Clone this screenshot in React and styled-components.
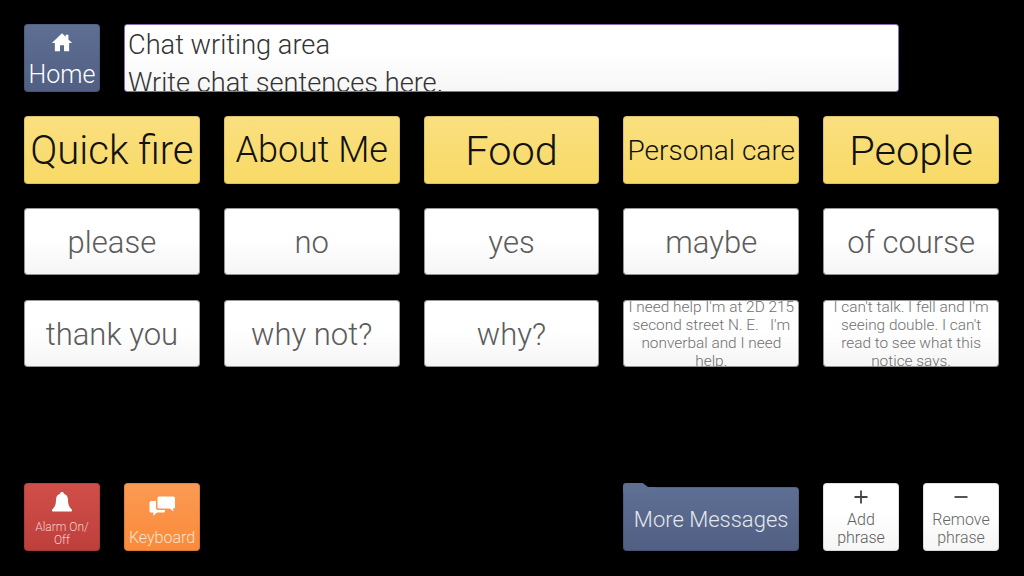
import React from "react";
import styled, { createGlobalStyle } from "styled-components";

const Global = createGlobalStyle`
  html, body { margin: 0; padding: 0; background: #000; }
  body { font-family: Roboto, "Liberation Sans", sans-serif; font-weight: 300; }
`;

const WHITE_BG = "linear-gradient(#ffffff 45%, #f5f5f5)";
const BLUE_BG = "linear-gradient(#5f6f94, #505f82)";

const Page = styled.div`
  width: 1024px;
  height: 576px;
  box-sizing: border-box;
  padding: 24px 25px 25px 24px;
  background: #000;
  display: flex;
  flex-direction: column;
  overflow: hidden;
`;

const TopBar = styled.div`
  display: flex;
  gap: 24px;
  height: 68px;
  margin-bottom: 24px;
  padding-right: 100px;
`;

const Grid = styled.div`
  display: grid;
  grid-template-columns: repeat(5, 1fr);
  grid-auto-rows: 68px;
  gap: 24px;
`;

const BottomBar = styled.div`
  margin-top: auto;
  display: grid;
  grid-template-columns: repeat(5, 1fr);
  gap: 24px;
  height: 68px;
`;

const Group = styled.div`
  display: flex;
  gap: 24px;
  grid-column: ${p => p.$span || "auto"};
  justify-content: ${p => p.$end ? "flex-end" : "flex-start"};
`;

const Tile = styled.div`
  box-sizing: border-box;
  border-radius: 4px;
  display: flex;
  align-items: center;
  justify-content: center;
  text-align: center;
  overflow: hidden;
  min-width: 0;
  box-shadow: inset 0 0 0 1px rgba(0, 0, 0, 0.12);
`;

const CategoryTile = styled(Tile)`
  background: linear-gradient(#fadf80, #f8da66);
  color: #111;
  font-size: ${p => p.$size || 40}px;
  white-space: nowrap;
`;

const PhraseTile = styled(Tile)`
  background: ${WHITE_BG};
  color: #5c5c5c;
  font-size: 31px;
  height: 67px;
  padding-top: 1px;
  box-shadow: inset 0 0 0 1px rgba(0, 0, 0, 0.4);
`;

const LongPhraseTile = styled(Tile)`
  background: ${WHITE_BG};
  color: #707070;
  font-size: 15.4px;
  line-height: 18px;
  padding: 0 3px;
  height: 67px;
  box-shadow: inset 0 0 0 1px rgba(0, 0, 0, 0.4);
`;

const SmallTile = styled(Tile)`
  width: 76px;
  flex: none;
  flex-direction: column;
  color: ${p => p.$fg || "#fff"};
  background: ${p => p.$bg};
  padding-top: ${p => p.$pt || 0}px;
`;

const IconSlot = styled.div`
  height: ${p => p.$h || 24}px;
  margin-bottom: ${p => p.$mb || 0}px;
  display: flex;
  align-items: center;
  justify-content: center;
`;

const Label = styled.div`
  font-size: ${p => p.$size || 16}px;
  line-height: ${p => p.$lh || 18}px;
  color: ${p => p.$color || "inherit"};
`;

const ChatBox = styled.div`
  flex: 1;
  box-sizing: border-box;
  background: linear-gradient(#ffffff 40%, #f6f6f6);
  border: 1px solid #8a6db0;
  border-radius: 3px;
  padding: 1px 3px 0;
  color: #333;
  font-size: 27.2px;
  line-height: 38px;
  overflow: hidden;
  white-space: nowrap;
`;

const FolderWrap = styled.div`
  position: relative;
  display: flex;
  align-items: flex-end;
  width: 100%;
  height: 68px;
`;

const FolderTab = styled.svg`
  position: absolute;
  left: 0;
  top: 0;
`;

const FolderBody = styled(Tile)`
  width: 100%;
  height: 64px;
  background: ${BLUE_BG};
  color: #e4e7ee;
  font-size: 22px;
  white-space: nowrap;
`;

const HomeIcon = () => (
  <svg width="22" height="22" viewBox="0 0 24 24" fill="#fff">
    <path d="M12 2.500 1 13h3.200v9h5.600v-6.500h4.400V22h5.600v-9H23l-4-3.800V4h-3v2.400z" />
  </svg>
);

const BellIcon = () => (
  <svg width="20" height="20" viewBox="0 0 20 20" fill="#fff">
    <path d="M10 0C8.900 0 8.200.7 8.100 1.700 5.200 2.500 4 5 4 8c0 4.500-1.200 7.300-3.500 9.200-.5.400-.5.800-.5 1.300 0 .7.500 1.100 1.200 1.100h17.600c.7 0 1.200-.4 1.200-1.100 0-.5 0-.9-.5-1.300C17.200 15.300 16 12.500 16 8c0-3-1.200-5.500-4.100-6.300C11.800.7 11.100 0 10 0z" />
  </svg>
);

const ChatIcon = () => (
  <svg width="27" height="22" viewBox="0 0 27 22" fill="#fff">
    <path d="M10 1.500h14.500a1.500 1.500 0 0 1 1.500 1.500v9a1.500 1.500 0 0 1-1.500 1.500H24l.5 3-3.600-3H10A1.500 1.500 0 0 1 8.500 12V3A1.500 1.500 0 0 1 10 1.500z" />
    <path d="M2 6h5v7a2 2 0 0 0 2 2h7v1a1.500 1.500 0 0 1-1.500 1.500H8L4 21l.5-3.500H2A1.500 1.500 0 0 1 .5 16V7.500A1.500 1.500 0 0 1 2 6z" />
  </svg>
);

const PlusIcon = () => (
  <svg width="16" height="16" viewBox="0 0 16 16" stroke="#444" strokeWidth="1.800" fill="none">
    <path d="M8 1.500v13M1.500 8h13" />
  </svg>
);

const MinusIcon = () => (
  <svg width="16" height="16" viewBox="0 0 16 16" stroke="#555" strokeWidth="1.800" fill="none">
    <path d="M1.500 8h13" />
  </svg>
);

const categories = [
  ["Quick fire", 40],
  ["About Me", 36],
  ["Food", 41.5],
  ["Personal care", 28],
  ["People", 41.5],
];
const shortPhrases = ["please", "no", "yes", "maybe", "of course", "thank you", "why not?", "why?"];
const longPhrases = [
  "I need help I'm at 2D 215 second street N. E.\u00a0\u00a0 I'm nonverbal and I need help.",
  "I can't talk. I fell and I'm seeing double. I can't read to see what this notice says.",
];

export default function App() {
  return (
    <Page>
      <Global />
      <TopBar>
        <SmallTile $bg={BLUE_BG} $pt={4}>
          <IconSlot $h={22} $mb={7}><HomeIcon /></IconSlot>
          <Label $size={25} $lh={30}>Home</Label>
        </SmallTile>
        <ChatBox>
          Chat writing area
          <br />
          Write chat sentences here.
        </ChatBox>
      </TopBar>
      <Grid>
        {categories.map(([t, s]) => (
          <CategoryTile key={t} $size={s}>{t}</CategoryTile>
        ))}
        {shortPhrases.map(t => (
          <PhraseTile key={t}>{t}</PhraseTile>
        ))}
        {longPhrases.map(t => (
          <LongPhraseTile key={t}>{t}</LongPhraseTile>
        ))}
      </Grid>
      <BottomBar>
        <Group $span="1 / 3">
          <SmallTile $bg="linear-gradient(#d14f49, #bd3f3c)" $pt={2}>
            <IconSlot $h={24} $mb={7}><BellIcon /></IconSlot>
            <Label $size={12} $lh={13} $color="#f3cfcc">Alarm On/<br />Off</Label>
          </SmallTile>
          <SmallTile $bg="linear-gradient(#fb9a54, #fa8a3a)" $pt={8}>
            <IconSlot $h={24} $mb={10}><ChatIcon /></IconSlot>
            <Label $size={16} $lh={20} $color="#fde3d0">Keyboard</Label>
          </SmallTile>
        </Group>
        <Group $span="4 / 5">
          <FolderWrap>
            <FolderTab width="32" height="10" viewBox="0 0 32 10">
              <path d="M0 10V3a3 3 0 0 1 3-3h16a3 3 0 0 1 2 1l4 3h7v6z" fill="#5f6f94" />
            </FolderTab>
            <FolderBody>More Messages</FolderBody>
          </FolderWrap>
        </Group>
        <Group $end>
          <SmallTile $bg={WHITE_BG} $fg="#5c5c5c">
            <IconSlot $h={20} $mb={4}><PlusIcon /></IconSlot>
            <Label $lh={18}>Add<br />phrase</Label>
          </SmallTile>
          <SmallTile $bg={WHITE_BG} $fg="#666">
            <IconSlot $h={20} $mb={4}><MinusIcon /></IconSlot>
            <Label $lh={18}>Remove<br />phrase</Label>
          </SmallTile>
        </Group>
      </BottomBar>
    </Page>
  );
}
